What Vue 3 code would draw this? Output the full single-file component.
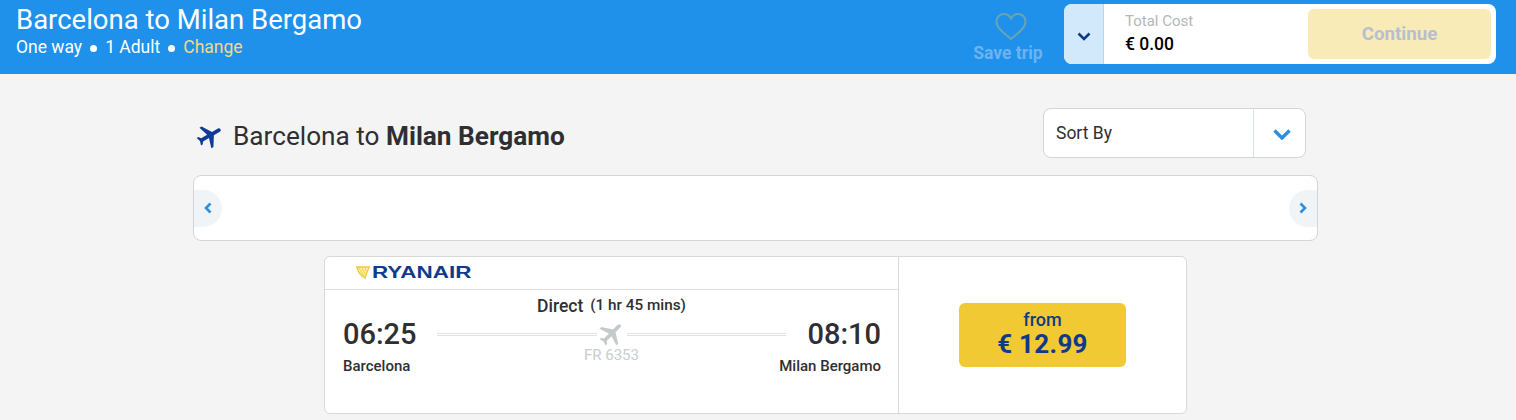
<template>
  <div class="page">
    <header class="topbar">
      <div class="trip">
        <div class="trip-title">Barcelona to Milan Bergamo</div>
        <div class="trip-meta">
          <span>One way</span>
          <i class="dot"></i>
          <span>1 Adult</span>
          <i class="dot"></i>
          <span class="change">Change</span>
        </div>
      </div>

      <div class="save">
        <svg class="heart" viewBox="0 0 32 28" width="32" height="29">
          <path d="M16 26.500C9 20.500 1.500 15.500 1.500 9 1.500 4.500 5 1.500 9 1.500c3 0 5.500 1.500 7 4.500 1.500-3 4-4.500 7-4.500 4 0 7.500 3 7.500 7.500 0 6.500-7.500 11.500-14.500 17.500z" fill="none" stroke="#66a5b5" stroke-width="2" />
        </svg>
        <span>Save trip</span>
      </div>

      <div class="cost">
        <div class="cost-toggle">
          <svg viewBox="0 0 14 9" width="14" height="9">
            <path d="M1.500 1.500 7 7l5.500-5.500" fill="none" stroke="#0f3a8a" stroke-width="2.600" />
          </svg>
        </div>
        <div class="cost-text">
          <div class="cost-label">Total Cost</div>
          <div class="cost-value">€ 0.00</div>
        </div>
        <div class="continue">Continue</div>
      </div>
    </header>

    <main class="content">
      <div class="heading-row">
        <div class="heading">
          <svg class="heading-plane" viewBox="0 0 24 24" width="30" height="30">
            <path :d="planePath" fill="#0f3a96" transform="rotate(60 12 12)" />
          </svg>
          <h2>Barcelona to <b>Milan Bergamo</b></h2>
        </div>
        <div class="sort">
          <span class="sort-label">Sort By</span>
          <div class="sort-arrow">
            <svg viewBox="0 0 18 11" width="18" height="11">
              <path d="M1.500 1.500 9 9l7.500-7.500" fill="none" stroke="#2b8fe0" stroke-width="3.400" />
            </svg>
          </div>
        </div>
      </div>

      <div class="dates">
        <div class="nav nav-left">
          <svg viewBox="0 0 8 12" width="8" height="12">
            <path d="M6.500 1.500 2 6l4.500 4.500" fill="none" stroke="#2b8fe0" stroke-width="2.600" />
          </svg>
        </div>
        <div class="nav nav-right">
          <svg viewBox="0 0 8 12" width="8" height="12">
            <path d="M1.500 1.500 6 6l-4.500 4.500" fill="none" stroke="#2b8fe0" stroke-width="2.600" />
          </svg>
        </div>
      </div>

      <section class="flight">
        <div class="flight-info">
          <div class="airline">
            <svg class="harp" viewBox="0 0 14 13" width="14" height="13">
              <path d="M0.700 1h12.600L11.500 5 9 12C5.500 10 2 6 0.700 1z" fill="#fbeeb8" stroke="#f1c933" stroke-width="1.300" />
              <path d="M3 2l5 8M6 2l3 6M9 2l1 3" stroke="#f1c933" stroke-width="0.900" />
            </svg>
            <span class="airline-name">RYANAIR</span>
          </div>
          <div class="times">
            <div class="point">
              <div class="time">06:25</div>
              <div class="city">Barcelona</div>
            </div>
            <div class="route">
              <div class="duration">
                <span class="direct">Direct</span>
                <span class="length">(1 hr 45 mins)</span>
              </div>
              <div class="track">
                <i class="line"></i>
                <svg viewBox="0 0 24 24" width="30" height="30">
                  <path :d="planePath" fill="#c4c9cc" transform="rotate(45 12 12)" />
                </svg>
                <i class="line"></i>
              </div>
              <div class="number">FR 6353</div>
            </div>
            <div class="point point-end">
              <div class="time">08:10</div>
              <div class="city">Milan Bergamo</div>
            </div>
          </div>
        </div>
        <div class="flight-price">
          <div class="price-btn">
            <span class="from">from</span>
            <span class="price">€ 12.99</span>
          </div>
        </div>
      </section>
    </main>
  </div>
</template>

<script setup>
const planePath = 'M21 16v-2l-8-5V3.500c0-.83-.67-1.500-1.500-1.500S10 2.670 10 3.500V9l-8 5v2l8-2.500V19l-2 1.500V22l3.500-1 3.500 1v-1.500L13 19v-5.500l8 2.500z'
</script>

<style>
html,
body {
  margin: 0;
  background: #f4f4f4;
}
</style>

<style scoped>
.page {
  height: 420px;
  overflow: hidden;
  background: #f4f4f4;
  font-family: Roboto, "Liberation Sans", sans-serif;
  color: #2f2f33;
}

.topbar {
  height: 74px;
  box-sizing: border-box;
  display: flex;
  align-items: flex-start;
  padding: 4px 20px 0 16px;
  background: #2091eb;
  color: #fff;
}

.trip {
  flex: 1;
}

.trip-title {
  font-size: 27.500px;
  line-height: 31px;
}

.trip-meta {
  display: flex;
  align-items: center;
  margin-top: 2px;
  font-size: 17.500px;
  line-height: 20px;
}

.dot {
  width: 7px;
  height: 7px;
  margin: 3px 8px 0;
  border-radius: 50%;
  background: #fff;
}

.change {
  color: #f3d983;
}

.save {
  width: 70px;
  margin: 8px 21px 0 0;
  display: flex;
  flex-direction: column;
  align-items: center;
  color: #6cb3f2;
  font-size: 17.500px;
  font-weight: 700;
  line-height: 20px;
  white-space: nowrap;
}

.heart {
  margin: 0 0 2px 6px;
}

.cost {
  width: 432px;
  height: 60px;
  display: flex;
  border-radius: 8px;
  overflow: hidden;
  background: #fff;
}

.cost-toggle {
  width: 40px;
  box-sizing: border-box;
  padding-top: 5px;
  display: flex;
  align-items: center;
  justify-content: center;
  background: #d2e8fb;
  border-right: 1px solid #b5d6f3;
}

.cost-text {
  flex: 1;
  padding: 8px 0 0 21px;
}

.cost-label {
  font-size: 15px;
  line-height: 18px;
  color: #b4b6b9;
}

.cost-value {
  margin-top: 3px;
  font-size: 17.500px;
  font-weight: 500;
  line-height: 22px;
  color: #000;
}

.continue {
  width: 183px;
  height: 50px;
  margin: 5px 5px 0 0;
  display: flex;
  align-items: center;
  justify-content: center;
  border-radius: 6px;
  background: #f9ebb7;
  color: #b5bfd0;
  font-size: 18.700px;
  font-weight: 700;
}

.content {
  width: 1125px;
  margin-left: 193px;
}

.heading-row {
  height: 101px;
  box-sizing: border-box;
  display: flex;
  align-items: flex-start;
  justify-content: space-between;
  padding: 34px 12px 0 0;
}

.heading {
  display: flex;
  align-items: center;
  gap: 8px;
  height: 50px;
  padding: 6px 0 0 2px;
  box-sizing: border-box;
}

.heading h2 {
  margin: 0;
  font-size: 26.200px;
  font-weight: 400;
  color: #2f2f33;
}

.heading b {
  font-weight: 700;
}

.sort {
  width: 263px;
  height: 50px;
  box-sizing: border-box;
  display: flex;
  align-items: center;
  border: 1px solid #d5d5d5;
  border-radius: 8px;
  background: #fff;
}

.sort-label {
  flex: 1;
  padding-left: 12px;
  font-size: 17.500px;
}

.sort-arrow {
  width: 52px;
  height: 100%;
  box-sizing: border-box;
  padding: 2px 0 0 4px;
  display: flex;
  align-items: center;
  justify-content: center;
  border-left: 1px solid #d6e4ef;
}

.dates {
  height: 66px;
  box-sizing: border-box;
  display: flex;
  align-items: center;
  justify-content: space-between;
  border: 1px solid #d5d5d5;
  border-radius: 8px;
  background: #fff;
}

.nav {
  width: 28px;
  height: 37px;
  display: flex;
  align-items: center;
  justify-content: center;
  background: #f1f4f7;
}

.nav-left {
  border-radius: 0 19px 19px 0;
}

.nav-right {
  border-radius: 19px 0 0 19px;
}

.flight {
  width: 863px;
  height: 158px;
  box-sizing: border-box;
  display: flex;
  margin: 15px 0 0 131px;
  border: 1px solid #d9d9d9;
  border-radius: 6px;
  background: #fff;
}

.flight-info {
  width: 574px;
  box-sizing: border-box;
  border-right: 1px solid #d9d9d9;
}

.airline {
  height: 33px;
  box-sizing: border-box;
  display: flex;
  align-items: center;
  gap: 2px;
  padding: 0 0 1px 31px;
  border-bottom: 1px solid #dcdfe3;
}

.airline-name {
  display: inline-block;
  transform: scaleX(1.36);
  transform-origin: left center;
  font-family: "Liberation Sans", sans-serif;
  font-size: 16.500px;
  font-weight: 700;
  color: #0f3a8e;
}

.times {
  display: flex;
  padding: 5px 17px 0 18px;
}

.point {
  width: 94px;
  padding-top: 22px;
}

.point-end {
  width: 95px;
  display: flex;
  flex-direction: column;
  align-items: flex-end;
}

.time {
  font-size: 29px;
  font-weight: 500;
  line-height: 34px;
  color: #2f2f33;
}

.city {
  margin-top: 6px;
  font-size: 15px;
  font-weight: 500;
  line-height: 18px;
  white-space: nowrap;
}

.route {
  flex: 1;
  text-align: center;
}

.duration {
  display: flex;
  justify-content: center;
  align-items: center;
  gap: 7px;
  height: 22px;
  line-height: 22px;
}

.direct {
  font-size: 17.500px;
  font-weight: 500;
}

.length {
  padding-bottom: 3px;
  font-size: 15.300px;
  font-weight: 500;
}

.track {
  display: flex;
  align-items: center;
  margin-top: 3px;
  height: 28px;
}

.line {
  flex: 1;
  height: 3px;
  box-sizing: border-box;
  border-top: 1px solid #e2e2e2;
  border-bottom: 1px solid #e2e2e2;
}

.number {
  margin-top: -2px;
  font-size: 15px;
  line-height: 18px;
  color: #c9cdd0;
}

.flight-price {
  flex: 1;
  display: flex;
  align-items: center;
  justify-content: center;
}

.price-btn {
  width: 167px;
  height: 64px;
  box-sizing: border-box;
  padding-bottom: 1px;
  display: flex;
  flex-direction: column;
  align-items: center;
  justify-content: center;
  border-radius: 6px;
  background: #f1c933;
  color: #0f3a8a;
}

.from {
  font-size: 18px;
  font-weight: 500;
  line-height: 18px;
}

.price {
  font-size: 26px;
  font-weight: 700;
  line-height: 30px;
  letter-spacing: 0.300px;
}
</style>
